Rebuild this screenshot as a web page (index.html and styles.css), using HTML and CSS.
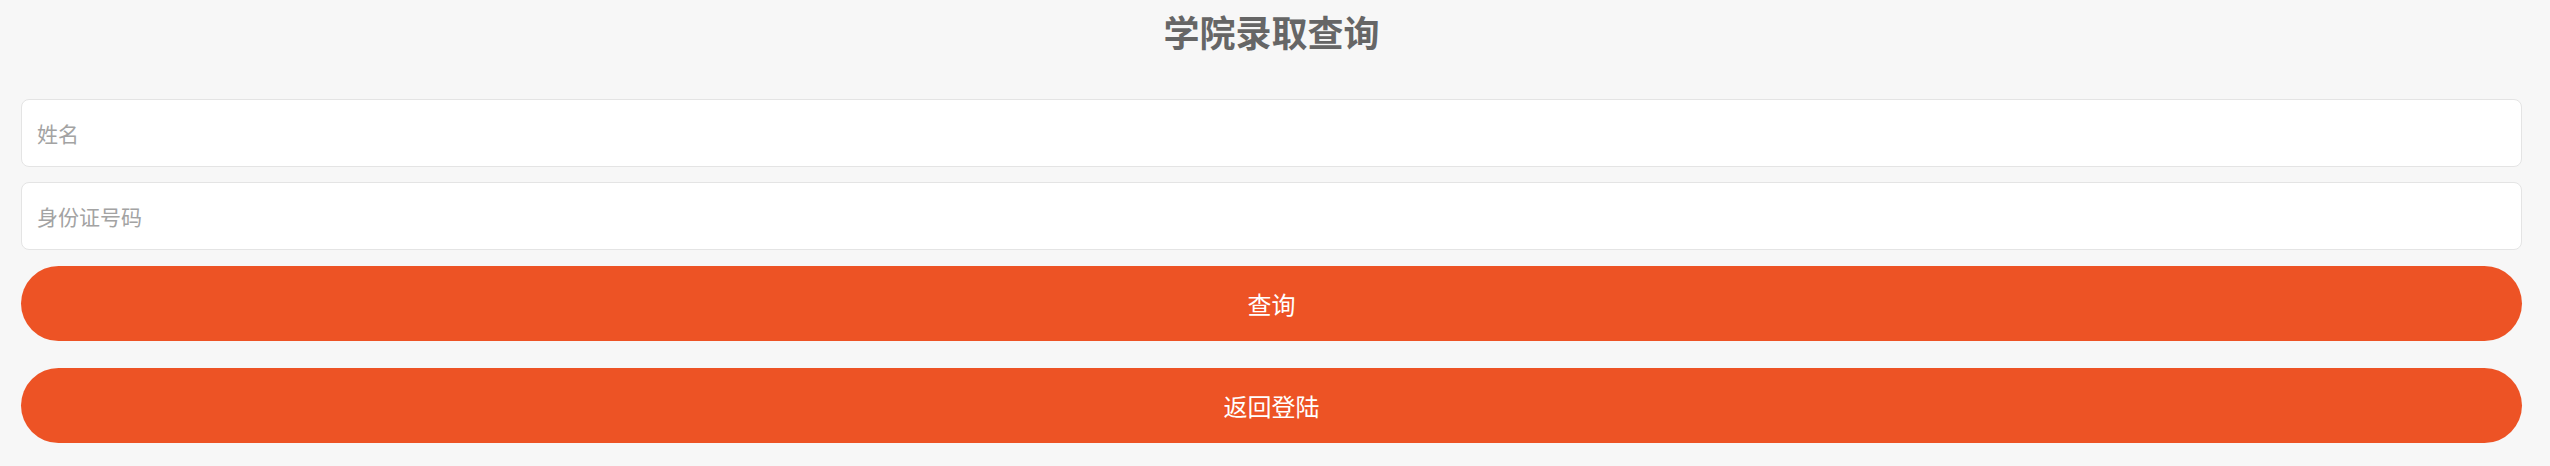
FILE: index.html
```html
<!DOCTYPE html>
<html lang="zh-CN">
<head>
<meta charset="utf-8">
<title>学院录取查询</title>
<link rel="stylesheet" href="styles.css">
</head>
<body>
<div class="page">
  <h1 class="title">学院录取查询</h1>
  <form class="form">
    <input class="field" type="text" placeholder="姓名">
    <input class="field" type="text" placeholder="身份证号码">
    <button class="btn btn-query" type="button">查询</button>
    <button class="btn btn-back" type="button">返回登陆</button>
  </form>
</div>
</body>
</html>
```

FILE: styles.css
```css
html, body {
  margin: 0;
  padding: 0;
  background: #f7f7f7;
}
body {
  font-family: "Noto Sans CJK SC", "Noto Sans", sans-serif;
}
.page {
  padding: 0 28px 0 21px;
}
.title {
  margin: 0;
  height: 62px;
  line-height: 62px;
  text-align: center;
  font-size: 36px;
  font-weight: 700;
  color: #666666;
}
.form {
  display: flex;
  flex-direction: column;
  margin-top: 37px;
}
.field {
  box-sizing: border-box;
  height: 68px;
  border: 1px solid #e4e4e4;
  border-radius: 8px;
  background: #ffffff;
  padding: 0 15px;
  font-family: inherit;
  font-size: 21px;
  color: #333;
  outline: none;
}
.field + .field {
  margin-top: 15px;
}
.field::placeholder {
  color: #a3a3a3;
}
.btn {
  height: 75px;
  border: 0;
  border-radius: 38px;
  background: #ed5325;
  color: #ffffff;
  font-family: inherit;
  font-size: 24px;
  padding: 0;
}
.btn-query {
  margin-top: 16px;
}
.btn-back {
  margin-top: 27px;
}
```
